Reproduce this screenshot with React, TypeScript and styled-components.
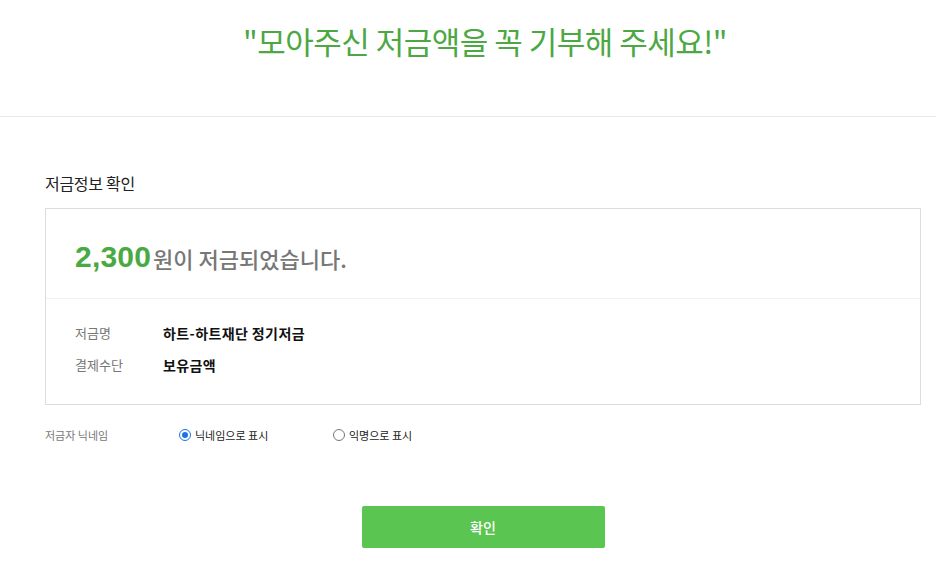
import React, { useState } from "react";
import styled, { createGlobalStyle } from "styled-components";

const Global = createGlobalStyle`
  html, body { margin: 0; padding: 0; background: #fff; }
  body { font-family: "Liberation Sans", "Noto Sans CJK KR", sans-serif; color: #222; }
  * { box-sizing: border-box; }
`;

const Page = styled.div`
  width: 936px;
  display: flex;
  flex-direction: column;
`;

const Header = styled.header`
  height: 117px;
  border-bottom: 1px solid #e8e8e8;
  display: flex;
  justify-content: center;
  padding: 19px 0 0 34px;
`;

const Title = styled.h1`
  margin: 0;
  font-family: "Noto Sans CJK KR", sans-serif;
  font-weight: 400;
  font-size: 31px;
  line-height: 44px;
  letter-spacing: -0.5px;
  color: #4ba843;
`;

const Content = styled.main`
  padding: 54px 15px 0 45px;
  display: flex;
  flex-direction: column;
`;

const SectionTitle = styled.h2`
  margin: 0 0 13px;
  font-family: "Noto Sans CJK KR", sans-serif;
  font-weight: 400;
  font-size: 16px;
  line-height: 24px;
  color: #222;
  letter-spacing: -0.3px;
`;

const Card = styled.section`
  border: 1px solid #dcdcdc;
  display: flex;
  flex-direction: column;
`;

const Summary = styled.div`
  height: 90px;
  border-bottom: 1px solid #f2f2f2;
  display: flex;
  align-items: center;
  padding: 6px 0 0 29px;
  gap: 2px;
`;

const Amount = styled.span`
  font-family: "Liberation Sans", "Noto Sans CJK KR", sans-serif;
  font-weight: 700;
  font-size: 30px;
  color: #49a942;
  letter-spacing: 0.2px;
`;

const SummaryText = styled.span`
  font-family: "Noto Sans CJK KR", sans-serif;
  font-weight: 500;
  font-size: 22px;
  color: #777;
  letter-spacing: 0px;
  margin-top: 3px;
`;

const Details = styled.dl`
  margin: 0;
  padding: 22px 29px 27px;
  display: grid;
  grid-template-columns: 88px 1fr;
  row-gap: 8px;
`;

const Label = styled.dt`
  font-family: "Noto Sans CJK KR", sans-serif;
  font-size: 13px;
  line-height: 24px;
  color: #777;
`;

const Value = styled.dd`
  margin: 0;
  font-family: "Noto Sans CJK KR", sans-serif;
  font-size: 14px;
  line-height: 24px;
  font-weight: 700;
  letter-spacing: 0.4px;
  color: #111;
`;

const NickRow = styled.div`
  display: flex;
  align-items: center;
  height: 24px;
  margin-top: 18px;
`;

const NickLabel = styled.span`
  width: 134px;
  font-family: "Noto Sans CJK KR", sans-serif;
  font-size: 11px;
  color: #777;
`;

const RadioOption = styled.label`
  display: flex;
  align-items: center;
  gap: 4px;
  width: 154px;
  font-family: "Noto Sans CJK KR", sans-serif;
  font-size: 11px;
  color: #222;
  cursor: pointer;
`;

const RadioDot = styled.span<{ $on: boolean }>`
  width: 12px;
  height: 12px;
  border-radius: 50%;
  border: 1px solid ${(p) => (p.$on ? "#1a73e8" : "#767676")};
  display: inline-flex;
  align-items: center;
  justify-content: center;
  background: #fff;
  &::after {
    content: "";
    width: 6px;
    height: 6px;
    border-radius: 50%;
    background: ${(p) => (p.$on ? "#1a73e8" : "transparent")};
  }
`;

const HiddenRadio = styled.input`
  display: none;
`;

const ButtonWrap = styled.div`
  display: flex;
  justify-content: center;
  margin-top: 59px;
`;

const ConfirmButton = styled.button`
  width: 243px;
  height: 42px;
  border: none;
  border-radius: 2px;
  background: #5bc551;
  color: #fff;
  font-family: "Noto Sans CJK KR", sans-serif;
  font-size: 14px;
  font-weight: 500;
  cursor: pointer;
`;

export default function App() {
  const [mode, setMode] = useState<"nick" | "anon">("nick");
  return (
    <Page>
      <Global />
      <Header>
        <Title>"모아주신 저금액을 꼭 기부해 주세요!"</Title>
      </Header>
      <Content>
        <SectionTitle>저금정보 확인</SectionTitle>
        <Card>
          <Summary>
            <Amount>2,300</Amount>
            <SummaryText>원이 저금되었습니다.</SummaryText>
          </Summary>
          <Details>
            <Label>저금명</Label>
            <Value>하트-하트재단 정기저금</Value>
            <Label>결제수단</Label>
            <Value>보유금액</Value>
          </Details>
        </Card>
        <NickRow>
          <NickLabel>저금자 닉네임</NickLabel>
          <RadioOption>
            <HiddenRadio type="radio" name="nick" checked={mode === "nick"} onChange={() => setMode("nick")} />
            <RadioDot $on={mode === "nick"} />
            닉네임으로 표시
          </RadioOption>
          <RadioOption>
            <HiddenRadio type="radio" name="nick" checked={mode === "anon"} onChange={() => setMode("anon")} />
            <RadioDot $on={mode === "anon"} />
            익명으로 표시
          </RadioOption>
        </NickRow>
        <ButtonWrap>
          <ConfirmButton>확인</ConfirmButton>
        </ButtonWrap>
      </Content>
    </Page>
  );
}
